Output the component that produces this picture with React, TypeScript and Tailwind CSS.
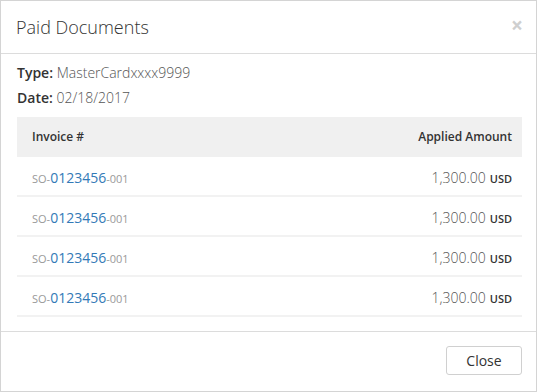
const rows = [1, 2, 3, 4];

export default function App() {
  return (
    <div
      className="w-[537px] h-[392px] bg-white border border-[#d4d4d4] flex flex-col text-[#333]"
      style={{ fontFamily: '"Open Sans", sans-serif' }}
    >
      {/* header */}
      <div className="h-[53px] shrink-0 border-b border-[#dcdcdc] flex items-center justify-between pl-[15px] pr-[13px]">
        <h1 className="text-[18px] font-light leading-none text-[#333]">Paid Documents</h1>
        <span className="text-[21px] font-bold leading-none text-[#cfcfcf] -mt-[3px]">×</span>
      </div>

      {/* body */}
      <div className="flex-1 pt-[6px] pl-[16px]">
        <div className="text-[14px] leading-[25px]">
          <span className="font-semibold text-[#333]">Type:</span>{' '}
          <span className="font-light text-[#555]">MasterCardxxxx9999</span>
        </div>
        <div className="text-[14px] leading-[25px]">
          <span className="font-semibold text-[#333]">Date:</span>{' '}
          <span className="font-light text-[#555]">02/18/2017</span>
        </div>

        <div className="w-[505px] mt-[7px]">
          <div className="h-[40px] bg-[#f0f0f0] flex items-center justify-between pl-[15px] pr-[10px] text-[12px] font-semibold text-[#333]">
            <span>Invoice #</span>
            <span>Applied Amount</span>
          </div>
          {rows.map((r) => (
            <div
              key={r}
              className="h-[40px] border-b-2 border-[#f2f2f2] flex items-center justify-between pl-[15px] pr-[10px] pt-[2px]"
            >
              <span className="flex items-baseline">
                <span className="text-[11px] text-[#999]">SO-</span>
                <span className="text-[14px] text-[#337ab7]">0123456</span>
                <span className="text-[11px] text-[#999]">-001</span>
              </span>
              <span className="flex items-baseline">
                <span className="text-[14px] font-light text-[#555]">1,300.00</span>
                <span className="text-[11px] font-semibold text-[#333] ml-[4px]">USD</span>
              </span>
            </div>
          ))}
        </div>
      </div>

      {/* footer */}
      <div className="h-[60px] shrink-0 border-t border-[#dcdcdc] flex items-start justify-end pt-[14px] pr-[14px]">
        <button className="w-[76px] h-[29px] rounded-[3px] border border-[#d0d0d0] bg-white text-[14px] text-[#333]">
          Close
        </button>
      </div>
    </div>
  );
}
